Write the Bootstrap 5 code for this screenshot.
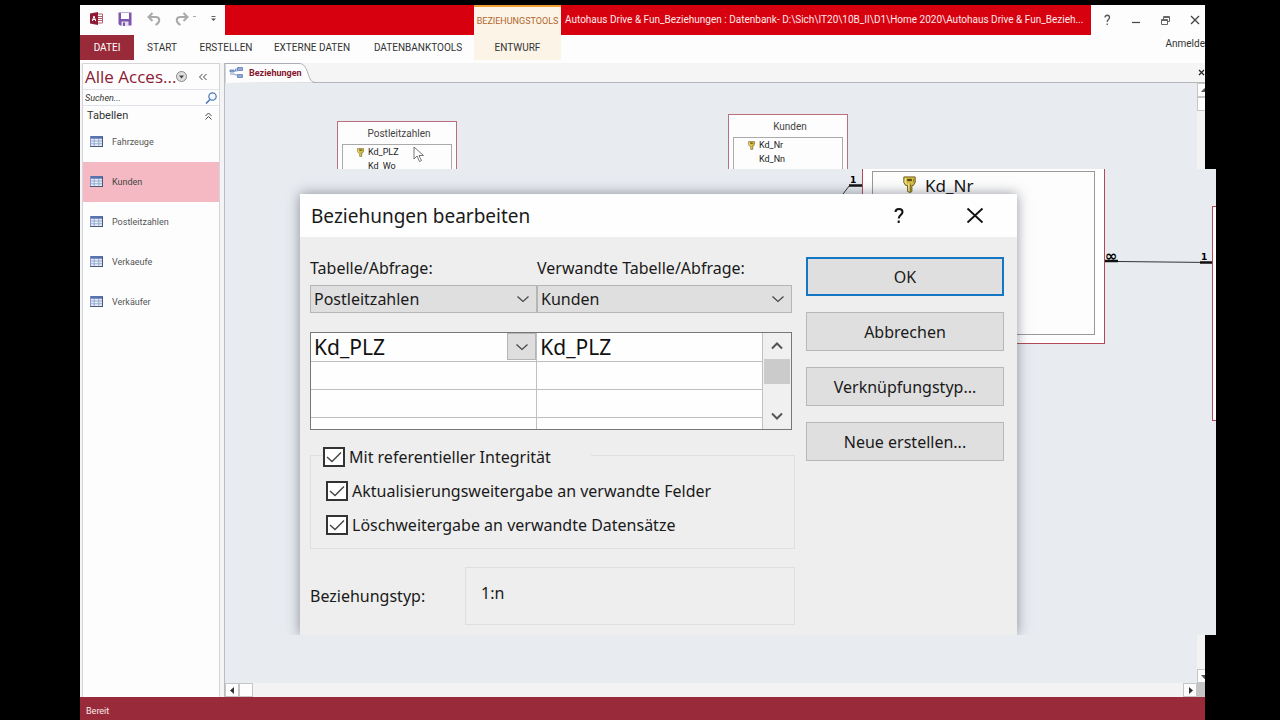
<!DOCTYPE html>
<html lang="de">
<head>
<meta charset="utf-8">
<meta name="viewport" content="width=device-width, initial-scale=1">
<title>Autohaus Drive &amp; Fun – Beziehungen</title>
<link href="https://cdn.jsdelivr.net/npm/bootstrap@5.3.0/dist/css/bootstrap.min.css" rel="stylesheet">
<style>
  :root { --wine:#982a39; --canvas:#e8ebf0; --face:#eeeeee; --btnface:#dfdfdf; }
  body { background:#000; color:#333; font-family:Roboto,"Open Sans",sans-serif; font-size:10px; line-height:16px; }
  a { color:inherit; text-decoration:none; }
  button { color:inherit; }
  .stage { padding:5px 75px 0 80px; }
  .app { background:#fdfdfd; }
  .plain { border:0; background:none; padding:0; line-height:0; }

  /* title bar and ribbon tabs */
  .titlebar { height:30px; }
  .titlebar > * { flex-shrink:0; }
  .quick { width:145px; padding:0 9px 3px 10px; }
  .red { background:#d7000f; color:#ffe9e9; }
  .red-left { width:249px; }
  .ctx { width:87px; background:#fdf4e8; }
  .ctx-top { border-top:2px solid #f0a030; color:#b0672a; font-size:9px; }
  .titlebar > .doc-title { flex:1 1 0; min-width:0; overflow:hidden; font-size:10px; padding:0 4px; }
  .wincontrols { width:114px; padding:0 5px 0 11px; }
  .ribbon { height:28px; font-size:10px; }
  .ribbon a { height:25px; line-height:26px; text-align:center; }
  .ribbon .file-tab { width:54px; background:var(--wine); color:#fff; }
  .tab-s { width:56px; }
  .tab-m { width:72px; }
  .tab-l { width:100px; }
  .tab-xl { width:112px; }
  .ribbon .sign { margin-left:auto; line-height:18px; }

  /* navigation pane */
  .navpane { width:145px; padding:0 4px 0 2px; background:#f4f4f6; border-right:1px solid #b9bcc4; }
  .navinner { background:#fdfdfd; border:1px solid #d5d5da; border-bottom:0; }
  .nav-title { height:25px; color:#8c1b33; font-family:"Open Sans",sans-serif; font-size:17px; padding-left:2px; }
  .searchrow { height:17px; border-top:1px solid #dfe3ea; border-bottom:1px solid #dfe3ea; }
  .searchrow input { border:0; outline:0; background:none; font-style:italic; font-size:9px; width:100%; min-width:0; padding:0 2px; color:#333; }
  .searchrow input::placeholder { color:#333; opacity:1; }
  .searchrow button { width:16px; flex:none; }
  .grouprow { height:16px; font-size:11px; padding:4px 7px 0 4px; }
  .objects a { height:40px; padding-left:7px; gap:9px; font-size:9px; color:#555; }
  .objects svg { margin-bottom:2px; }
  .objects a.current { background:#f5b9c4; color:#444; }

  /* document area */
  .tabstrip { height:20px; background:#f5f5f5; border-bottom:1px solid #b4b7bc; }
  .doctab { width:90px; height:20px; color:#84142c; font-weight:700; font-size:9px; }
  .doctab svg { position:absolute; left:0; top:0; }
  .doctab span { position:relative; }
  .canvas { background:var(--canvas); }
  .canvas-body { height:600px; }
  .vbar { width:8px; background:#f3f3f3; overflow:hidden; }
  .hbar { height:14px; background:#f3f3f3; }
  .corner { width:8px; background:#c4c4c4; }
  .sbtn { width:14px; height:14px; background:#fdfdfd; border:1px solid #c6c6c6; flex:none; line-height:0; padding:0; }
  .entity { position:absolute; background:#fdfdfd; border:1px solid #b9707c; width:120px; height:80px; padding:0 4px; }
  .entity-plz { left:112px; top:38px; }
  .entity-kunden { left:503px; top:31px; }
  .entity-name { height:22px; line-height:24px; text-align:center; padding-left:4px; color:#444; }
  .entity-fields { border:1px solid #aaa; height:60px; padding-left:14px; color:#222; line-height:14px; font-size:9px; }
  .entity-fields div { padding-left:11px; height:14px; }
  .entity-fields .pk { padding-left:0; gap:4px; }
  .cursor { position:absolute; left:188px; top:63px; }

  /* enlarged view laid over the canvas */
  .lens { position:absolute; left:59px; right:-11px; top:86px; padding:25px 0 0 16px; background:var(--canvas); overflow:hidden; color:#111; }
  .lens-entity { position:absolute; left:578px; top:-1px; width:243px; height:176px; background:#fff; border:1px solid #b04a58; border-top:0; padding:3px 9px 8px; }
  .lens-fields { border:1px solid #999; height:100%; background:#fdfdfd; font-family:"Noto Sans","Open Sans",sans-serif; font-size:17px; line-height:28px; padding-left:29px; }
  .lens-fields svg { vertical-align:-1px; }
  .lens-edge { position:absolute; right:0; top:37px; width:4px; height:215px; background:#fff; border:1px solid #b04a58; border-right:0; }
  .links { position:absolute; left:0; top:0; }
  .dlg { position:relative; width:717px; background:var(--face); box-shadow:0 0 12px rgba(60,65,80,.55); font-size:16px; line-height:24px; color:#1a1a1a; font-family:"Noto Sans","Open Sans",sans-serif; }
  .dlg-head { height:43px; background:#fefefe; padding:0 33px 0 11px; font-size:19px; }
  .dlg-tools { gap:61px; }
  .dlg-body { padding:19px 13px 10px 10px; gap:11px; }
  .dlg-main { min-width:0; }
  .gridwide { margin-right:3px; }
  .gridwide label { display:block; margin-bottom:5px; }
  .related { width:255px; }
  .pick { appearance:none; border:1px solid #b5b5b5; border-radius:0; color:#1a1a1a; height:28px; width:100%; padding:0 3px; line-height:24px;
    background:var(--btnface) url("data:image/svg+xml,%3Csvg xmlns='http://www.w3.org/2000/svg' width='14' height='8'%3E%3Cpath d='M1.500 1.500l5.500 5 5.500-5' fill='none' stroke='%23444' stroke-width='1.200'/%3E%3C/svg%3E") no-repeat right 6px center; }
  .fieldgrid { height:98px; border:1px solid #777; margin-top:19px; background:#fefefe; overflow:hidden; }
  .fieldgrid table { table-layout:fixed; font-size:21px; }
  .fieldgrid td { padding:0; height:28px; border-right:1px solid #c0c0c0; border-bottom:1px solid #c0c0c0; }
  .fieldgrid input { display:block; border:0; outline:0; background:none; width:100%; min-width:0; height:27px; padding:0 3px; color:#111; }
  .dropbtn { width:29px; height:27px; flex:none; background:#dedede; border:1px solid #b5b5b5; padding:0; line-height:0; }
  .gridbar { width:28px; flex:none; background:#f0f0f0; padding:0 1px; }
  .gridbar button { height:26px; }
  .thumb { height:25px; background:#cbcbcb; }
  .opts { border:1px solid #dfdfdf; margin-top:11px; padding:0 0 11px 15px; }
  .opts legend { float:none; width:auto; margin:0 0 10px -3px; padding:4px 40px 0 0; height:28px; font-size:16px; line-height:24px; }
  .opts label { height:24px; }
  .opts label + label { margin-top:10px; }
  .tick { appearance:none; width:22px; height:20px; margin:0 4px 0 0; border:2px solid #333; flex:none;
    background:#fff url("data:image/svg+xml,%3Csvg xmlns='http://www.w3.org/2000/svg' width='18' height='16'%3E%3Cpath d='M2 8l5 4.500 9-9' fill='none' stroke='%23444' stroke-width='1.400'/%3E%3C/svg%3E") no-repeat center; }
  .kind { margin-top:18px; }
  .kind label { width:155px; }
  .kind output { height:58px; border:1px solid #dfdfdf; padding:13px 15px; }
  .cmds { width:198px; flex:none; padding-top:1px; gap:16px; }
  .cmds button { height:39px; border:1px solid #b8b8b8; background:var(--btnface); color:#1a1a1a; border-radius:0; padding:0; font-size:16px; }
  .cmds .main { border:2px solid #1477c4; }
  .status { height:23px; background:var(--wine); color:#fbeaec; font-size:9px; padding-left:6px; line-height:29px; }
</style>
</head>
<body>
<svg width="0" height="0" class="position-absolute" aria-hidden="true">
  <symbol id="sheet" viewBox="0 0 14 12"><path d="M0 0h14v12H0z" fill="#e9effa"/><path d="M0 0h14v3H0z" fill="#5872ad"/><path d="M1 5.500h12M1 8.500h12M4.500 3v8M9.500 3v8" stroke="#8ea3cc"/><path d="M.5 0v12" stroke="#7c90bf"/><path d="M0 11.500h14M13.500 1v11" stroke="#34466f"/></symbol>
  <symbol id="key" viewBox="0 0 14 18"><path d="M1 1h12v6l-2 3H9.500v6.500l-2 1-2.500-1V10H3L1 7z" fill="#d9c24a" stroke="#6b5410"/><path d="M4.500 3h5v2.500h-5z" fill="#5d4c10"/><path d="M2.500 2.500v4.500l1.500 2M6.200 8v8" stroke="#fff6ae" fill="none"/><path d="M8 8v9M11.500 3v4" stroke="#8a7420"/></symbol>
</svg>
<div class="stage min-vh-100 d-flex flex-column">
<div class="app flex-grow-1 d-flex flex-column">
  <header>
    <div class="titlebar d-flex">
      <div class="quick d-flex align-items-center justify-content-between">
        <svg width="13" height="13" viewBox="0 0 13 13"><path d="M7 2h5.500v9H7z" fill="#fff" stroke="#b0606c"/><path d="M8 4.500h4M8 6.500h4M8 8.500h4" stroke="#b0606c"/><path d="M0 1.500L8 0v13l-8-1.500z" fill="#8c1b33"/><path d="M2.300 9L4 4l1.700 5M2.800 7.500h2.400" stroke="#fff" fill="none"/></svg>
        <button class="plain" aria-label="Speichern"><svg width="14" height="14" viewBox="0 0 14 14"><path d="M.5.5h13v13H2l-1.500-1.500z" fill="#7d57ad"/><path d="M3 1h8v6H3z" fill="#fff"/><path d="M3.500 9.500h7V14h-7z" fill="#e8def4"/><path d="M5 10.500h2V14H5z" fill="#7d57ad"/></svg></button>
        <button class="plain" aria-label="Rückgängig"><svg width="14" height="14" viewBox="0 0 14 14"><path d="M5.500 1L1.500 5l4 4M2 5h6.500c5 0 5 5 0 8" fill="none" stroke="#aaa" stroke-width="2"/></svg></button>
        <button class="plain" aria-label="Wiederholen"><svg width="21" height="14" viewBox="0 0 21 14"><path d="M8.500 1l4 4-4 4M12 5H5.500c-5 0-5 5 0 8" fill="none" stroke="#aaa" stroke-width="2"/><path d="M18 4.500h3" stroke="#aaa"/></svg></button>
        <button class="plain" aria-label="Anpassen"><svg width="5" height="6" viewBox="0 0 5 6"><path d="M.5.5h4" stroke="#666"/><path d="M0 2.500h5L2.500 5z" fill="#555"/></svg></button>
      </div>
      <div class="red red-left"></div>
      <div class="ctx ctx-top d-flex align-items-center justify-content-center">BEZIEHUNGSTOOLS</div>
      <div class="red doc-title d-flex align-items-center text-nowrap">Autohaus Drive &amp; Fun_Beziehungen : Datenbank- D:\Sich\IT20\10B_II\D1\Home 2020\Autohaus Drive &amp; Fun_Bezieh...</div>
      <div class="wincontrols d-flex align-items-center justify-content-between">
        <button class="plain" aria-label="Hilfe"><svg width="10" height="12" viewBox="0 0 10 12"><path d="M3 3.500C3 .5 7.500 .5 7.500 3.500 7.500 5.500 5.200 5.500 5.200 8M5.200 9.500v1.500" fill="none" stroke="#555" stroke-width="1.300"/></svg></button>
        <button class="plain" aria-label="Minimieren"><svg width="8" height="10" viewBox="0 0 8 10"><path d="M0 7.500h8" stroke="#444" stroke-width="1.200"/></svg></button>
        <button class="plain" aria-label="Wiederherstellen"><svg width="9" height="9" viewBox="0 0 9 9"><path d="M.5 3.500h6v5h-6zM.5 4.500h6M2.500 3V.5h6v5H7M2.500 1.500h6" fill="none" stroke="#666"/></svg></button>
        <button class="plain" aria-label="Schließen"><svg width="10" height="10" viewBox="0 0 10 10"><path d="M1 1l8 8M9 1L1 9" stroke="#444" stroke-width="1.300"/></svg></button>
      </div>
    </div>
    <nav class="ribbon d-flex">
      <a href="#" class="file-tab">DATEI</a>
      <a href="#" class="tab-s">START</a>
      <a href="#" class="tab-m">ERSTELLEN</a>
      <a href="#" class="tab-l">EXTERNE DATEN</a>
      <a href="#" class="tab-xl">DATENBANKTOOLS</a>
      <a href="#" class="ctx">ENTWURF</a>
      <a href="#" class="sign">Anmelde</a>
    </nav>
  </header>
  <main class="flex-grow-1 d-flex">
    <aside class="navpane flex-shrink-0 d-flex">
      <div class="navinner flex-grow-1">
        <div class="nav-title d-flex align-items-center">Alle Acces...
          <button class="plain" aria-label="Objekttypen"><svg width="11" height="11" viewBox="0 0 11 11"><circle cx="5.500" cy="5.500" r="5" fill="#ddd" stroke="#888"/><path d="M3 4.500h5l-2.500 3z" fill="#444"/></svg></button>
          <button class="plain ms-auto me-2 pe-1" aria-label="Einklappen"><svg width="8" height="8" viewBox="0 0 8 8"><path d="M3.500 1l-3 3 3 3M7.500 1l-3 3 3 3" fill="none" stroke="#444"/></svg></button>
        </div>
        <div class="searchrow d-flex align-items-center">
          <input type="text" placeholder="Suchen..." aria-label="Suchen">
          <button class="plain" aria-label="Suche starten"><svg width="12" height="12" viewBox="0 0 12 12"><circle cx="7.500" cy="4.500" r="3.700" fill="#f4f8ff" stroke="#4d79b5" stroke-width="1.200"/><path d="M5 7.500l-4 4" stroke="#4d79b5" stroke-width="1.600"/></svg></button>
        </div>
        <div class="grouprow d-flex align-items-center justify-content-between">Tabellen
          <button class="plain" aria-label="Gruppe einklappen"><svg width="7" height="8" viewBox="0 0 7 8"><path d="M.5 4l3-3 3 3M.5 7.500l3-3 3 3" fill="none" stroke="#444"/></svg></button>
        </div>
        <div class="objects">
          <a href="#" class="d-flex align-items-center"><svg width="13" height="11"><use href="#sheet"/></svg>Fahrzeuge</a>
          <a href="#" class="d-flex align-items-center current"><svg width="13" height="11"><use href="#sheet"/></svg>Kunden</a>
          <a href="#" class="d-flex align-items-center"><svg width="13" height="11"><use href="#sheet"/></svg>Postleitzahlen</a>
          <a href="#" class="d-flex align-items-center"><svg width="13" height="11"><use href="#sheet"/></svg>Verkaeufe</a>
          <a href="#" class="d-flex align-items-center"><svg width="13" height="11"><use href="#sheet"/></svg>Verkäufer</a>
        </div>
      </div>
    </aside>
    <section class="flex-grow-1 d-flex flex-column">
      <div class="tabstrip d-flex justify-content-between">
        <a href="#" class="doctab position-relative d-flex align-items-center"><svg width="92" height="20" viewBox="0 0 92 20"><path d="M0 20V.5h74c5 0 7 4 9 10 2 6 3 9 8 9" fill="#fdfdfd" stroke="#a9adb5"/><g fill="#8fabdc" stroke="#5f7fb5" stroke-width=".8"><path d="M12.500 4.500h5v3h-5zM12.500 11.500h5v3h-5zM5 7h4v2H5z"/><path d="M5 11h4M9 8h3.500M9 11l3.500 1.500M10.500 8V6h2" fill="none"/></g></svg><span class="ps-4">Beziehungen</span></a>
        <button class="plain" aria-label="Dokument schließen"><svg width="7" height="7" viewBox="0 0 7 7"><path d="M1 1l5 5M6 1L1 6" stroke="#222" stroke-width="1.200"/></svg></button>
      </div>
      <div class="canvas position-relative flex-grow-1 d-flex">
        <div class="canvas-body flex-grow-1">
          <div class="entity entity-plz"><div class="entity-name">Postleitzahlen</div><div class="entity-fields"><div class="pk d-flex align-items-center"><svg width="7" height="9"><use href="#key"/></svg>Kd_PLZ</div><div>Kd_Wo</div></div></div>
          <div class="entity entity-kunden"><div class="entity-name">Kunden</div><div class="entity-fields"><div class="pk d-flex align-items-center"><svg width="7" height="9"><use href="#key"/></svg>Kd_Nr</div><div>Kd_Nn</div></div></div>
          <svg class="cursor" width="12" height="17" viewBox="0 0 12 17"><path d="M1 1v12l3-3 2.500 5.500 2-1L6 9.500h4.500z" fill="#fff" stroke="#555" stroke-width=".8"/></svg>
        </div>
        <div class="vbar d-flex flex-column">
          <button class="sbtn" aria-label="Nach oben"><svg width="12" height="12"><path d="M3 8h7L6.500 4z" fill="#555"/></svg></button>
          <div class="sbtn"></div>
          <button class="sbtn mt-auto" aria-label="Nach unten"><svg width="12" height="12"><path d="M3 5h7L6.500 9z" fill="#555"/></svg></button>
        </div>
        <div class="lens">
          <div class="lens-entity"><div class="lens-fields"><svg class="me-2" width="15" height="17"><use href="#key"/></svg>Kd_Nr</div></div>
          <div class="lens-edge"></div>
          <svg class="links" width="932" height="110" viewBox="0 0 932 110"><path d="M559 25l6.500-8.500M834 92.500l94 1" stroke="#333" fill="none"/><path d="M565 16.500h13M821 92h13M916 93.500h12" stroke="#111" stroke-width="2.500"/><text x="566" y="14" font-size="9" font-weight="700" font-family="DejaVu Sans">1</text><text x="821" y="92" font-size="15" font-weight="700" font-family="DejaVu Sans">∞</text><text x="917" y="91" font-size="9" font-weight="700" font-family="DejaVu Sans">1</text></svg>
          <div class="dlg" role="dialog" aria-labelledby="dlg-title">
            <div class="dlg-head d-flex align-items-center justify-content-between"><span id="dlg-title">Beziehungen bearbeiten</span>
              <div class="dlg-tools d-flex align-items-center"><button class="plain" aria-label="Hilfe"><svg width="12" height="18" viewBox="0 0 12 18"><path d="M2.500 5C2.500 1 9.500 1 9.500 5c0 3-3.800 3.200-3.800 6.500M5.700 13.500V16" fill="none" stroke="#111" stroke-width="2"/></svg></button><button class="plain" aria-label="Schließen"><svg width="18" height="18" viewBox="0 0 18 18"><path d="M1.500 1.500l15 14M16.500 1.500l-15 14" stroke="#111" stroke-width="1.800"/></svg></button></div>
            </div>
            <div class="dlg-body d-flex">
              <div class="dlg-main flex-grow-1">
                <div class="gridwide">
                  <div class="row g-0">
                    <div class="col"><label for="t1">Tabelle/Abfrage:</label><select id="t1" class="pick"><option>Postleitzahlen</option></select></div>
                    <div class="col-auto related"><label for="t2">Verwandte Tabelle/Abfrage:</label><select id="t2" class="pick"><option>Kunden</option></select></div>
                  </div>
                  <div class="fieldgrid d-flex">
                    <table class="w-100"><tbody>
                      <tr><td><div class="d-flex"><input value="Kd_PLZ" aria-label="Feld"><button class="dropbtn" aria-label="Feld wählen"><svg width="14" height="8"><path d="M1.500 1.500l5.500 5 5.500-5" fill="none" stroke="#444" stroke-width="1.200"/></svg></button></div></td><td><input value="Kd_PLZ" aria-label="Verwandtes Feld"></td></tr>
                      <tr><td></td><td></td></tr><tr><td></td><td></td></tr><tr><td></td><td></td></tr>
                    </tbody></table>
                    <div class="gridbar d-flex flex-column"><button class="plain" aria-label="Nach oben"><svg width="12" height="8"><path d="M1 6.500l5-5 5 5" fill="none" stroke="#555" stroke-width="2"/></svg></button><div class="thumb"></div><button class="plain mt-auto" aria-label="Nach unten"><svg width="12" height="8"><path d="M1 1.500l5 5 5-5" fill="none" stroke="#555" stroke-width="2"/></svg></button></div>
                  </div>
                </div>
                <fieldset class="opts">
                  <legend><label class="d-flex align-items-center"><input class="tick" type="checkbox" checked>Mit referentieller Integrität</label></legend>
                  <label class="d-flex align-items-center"><input class="tick" type="checkbox" checked>Aktualisierungsweitergabe an verwandte Felder</label>
                  <label class="d-flex align-items-center"><input class="tick" type="checkbox" checked>Löschweitergabe an verwandte Datensätze</label>
                </fieldset>
                <div class="kind d-flex align-items-center"><label for="kind">Beziehungstyp:</label><output id="kind" class="flex-grow-1">1:n</output></div>
              </div>
              <div class="cmds d-flex flex-column"><button class="main">OK</button><button>Abbrechen</button><button>Verknüpfungstyp...</button><button>Neue erstellen...</button></div>
            </div>
          </div>
        </div>
      </div>
      <div class="hbar d-flex"><button class="sbtn" aria-label="Nach links"><svg width="12" height="12"><path d="M8 3v7L4 6.500z" fill="#333"/></svg></button><div class="sbtn"></div><button class="sbtn ms-auto" aria-label="Nach rechts"><svg width="12" height="12"><path d="M5 3v7l4-3.500z" fill="#333"/></svg></button><div class="corner"></div></div>
    </section>
  </main>
  <footer class="status">Bereit</footer>
</div>
</div>
<script src="https://cdn.jsdelivr.net/npm/bootstrap@5.3.0/dist/js/bootstrap.bundle.min.js"></script>
</body>
</html>
